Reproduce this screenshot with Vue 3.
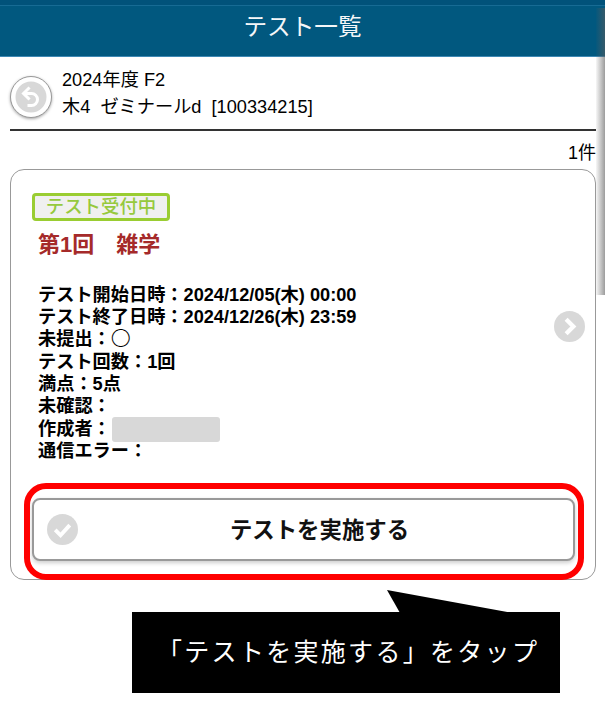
<script setup>
const rows = [
  { label: 'テスト開始日時：', value: '2024/12/05(木) 00:00' },
  { label: 'テスト終了日時：', value: '2024/12/26(木) 23:59' },
  { label: '未提出：', value: '〇' },
  { label: 'テスト回数：', value: '1回' },
  { label: '満点：', value: '5点' },
  { label: '未確認：', value: '' },
  { label: '作成者：', value: '', redacted: true },
  { label: '通信エラー：', value: '' }
]
</script>

<template>
  <div class="page">
    <header class="header">テスト一覧</header>
    <section class="course">
      <button class="back" type="button" aria-label="戻る">
        <svg viewBox="0 0 32 32" width="32" height="32">
          <circle cx="16" cy="16" r="15.5" fill="#d8d8d8" />
          <path d="M13.5 7.5 8.5 12.5l5 5" fill="none" stroke="#fff" stroke-width="3" stroke-linecap="square" />
          <path d="M10 12.5h6.5a6 6 0 0 1 0 12H12.5" fill="none" stroke="#fff" stroke-width="3" />
        </svg>
      </button>
      <div class="course-text">
        <div>2024年度 F2</div>
        <div>木4&nbsp; ゼミナールd&nbsp; [100334215]</div>
      </div>
    </section>
    <div class="count">1件</div>
    <article class="card">
      <div class="badge">テスト受付中</div>
      <h2 class="title">第1回　雑学</h2>
      <div class="body">
        <div class="details">
          <div v-for="row in rows" :key="row.label" class="detail">
            {{ row.label }}<span v-if="row.value" :class="{ circle: row.value === '〇' }">{{ row.value }}</span>
            <span v-if="row.redacted" class="redact"></span>
          </div>
        </div>
        <svg class="chevron" viewBox="0 0 32 32" width="31" height="31">
          <circle cx="16" cy="16" r="16" fill="#d8d8d8" />
          <path d="M12.5 8.5 20 16l-7.5 7.5" fill="none" stroke="#fff" stroke-width="4.4" />
        </svg>
      </div>
      <div class="action-wrap">
        <button class="action" type="button">
          <svg class="check" viewBox="0 0 32 32" width="31" height="31">
            <circle cx="16" cy="16" r="16" fill="#d8d8d8" />
            <path d="M8.5 16.5l5.5 5.5 9.5-10.5" fill="none" stroke="#fff" stroke-width="4" />
          </svg>
          <span>テストを実施する</span>
        </button>
        <div class="highlight"></div>
      </div>
    </article>
    <div class="callout">
      <svg class="tail" viewBox="0 0 126 23" width="126" height="23"><path d="M0 0 13 23H126Z" fill="#000" /></svg>
      「テストを実施する」をタップ
    </div>
    <div class="scroll-edge"></div>
  </div>
</template>

<style>
html, body { background: #fff; overflow: hidden; }
</style>

<style scoped>
.page {
  position: relative;
  width: 606px;
  height: 727px;
  overflow: hidden;
  background: #fff;
  color: #000;
  font-family: "Liberation Sans", "Noto Sans CJK JP", sans-serif;
}
.header {
  height: 57px;
  box-sizing: border-box;
  width: 605px;
  background: linear-gradient(#01527a 0 5px, #176b94 5px 6px, #01587f 6px 56px, #3d88b4 56px);
  color: #f4f6f8;
  font-size: 23.6px;
  line-height: 54px;
  text-align: center;
}
.course {
  display: flex;
  align-items: center;
  gap: 10px;
  height: 72px;
  margin: 0 10px;
  border-bottom: 2px solid #333;
  box-sizing: content-box;
}
.back {
  flex: none;
  width: 42px;
  height: 42px;
  margin-top: 8px;
  padding: 0;
  display: flex;
  align-items: center;
  justify-content: center;
  background: #fff;
  border: 1px solid #999;
  border-radius: 50%;
  box-shadow: 0 1px 3px rgba(0, 0, 0, .35);
}
.course-text {
  font-size: 18.2px;
  line-height: 27px;
  margin-top: 1px;
}
.count {
  margin: 12px 10px 0;
  font-size: 18px;
  line-height: 21px;
  height: 26px;
  text-align: right;
}
.card {
  box-sizing: border-box;
  width: 586px;
  height: 411px;
  margin: 0 10px;
  padding: 23px 21px 0;
  background: #fff;
  border: 1px solid #999;
  border-radius: 14px;
}
.badge {
  box-sizing: border-box;
  width: 138px;
  height: 28px;
  background: #f0f0f0;
  border: 3px solid #9acd32;
  border-radius: 4px;
  color: #96c93d;
  font-size: 18.4px;
  font-weight: 500;
  line-height: 22px;
  text-align: center;
}
.title {
  margin: 10px 0 0 6px;
  color: #a52a2a;
  font-size: 22px;
  font-weight: 700;
  line-height: 28px;
}
.body {
  display: flex;
  align-items: flex-start;
  justify-content: space-between;
  margin: 24.5px 0 0 6px;
  height: 179.5px;
}
.details {
  font-size: 18.2px;
  font-weight: 700;
  line-height: 22.4px;
}
.detail {
  display: flex;
  align-items: center;
  height: 22.4px;
  white-space: pre;
}
.circle { font-weight: 300; font-size: 20px; }
.redact {
  width: 108px;
  height: 25px;
  margin-left: 1px;
  background: #d8d8d8;
  border-radius: 3px;
}
.chevron { flex: none; margin: 27px -11px 0 0; }
.action-wrap {
  position: relative;
  margin-top: 35px;
}
.action {
  position: relative;
  display: flex;
  align-items: center;
  justify-content: center;
  box-sizing: border-box;
  width: 543px;
  height: 63px;
  padding: 0 0 4px 32px;
  background: #fff;
  border: 2px solid #999;
  border-radius: 8px;
  box-shadow: 0 2px 4px rgba(0, 0, 0, .2);
  color: #111;
  font-family: inherit;
  font-size: 22.4px;
  font-weight: 700;
}
.check {
  position: absolute;
  left: 13px;
  top: 14px;
}
.highlight {
  position: absolute;
  left: -8px;
  top: -15px;
  width: 560px;
  height: 97px;
  box-sizing: border-box;
  border: 6px solid #f00;
  border-radius: 22px;
  pointer-events: none;
}
.callout {
  position: relative;
  box-sizing: border-box;
  width: 428px;
  height: 81px;
  margin: 32px 0 0 132px;
  padding-left: 25px;
  background: #000;
  color: #fff;
  font-size: 25px;
  font-weight: 400;
  letter-spacing: 2.3px;
  line-height: 80px;
  white-space: nowrap;
}
.tail {
  position: absolute;
  left: 255px;
  top: -22px;
}
.scroll-edge {
  position: absolute;
  right: 1px;
  top: 8px;
  width: 9px;
  height: 287px;
  background: linear-gradient(to right, rgba(90, 90, 90, .05), rgba(90, 90, 90, .6));
  pointer-events: none;
}
</style>
